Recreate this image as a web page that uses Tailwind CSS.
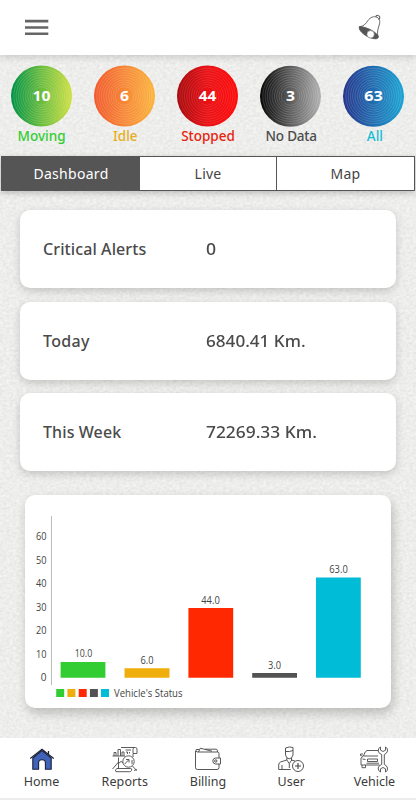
<!DOCTYPE html>
<html lang="en">
<head>
<meta charset="utf-8">
<meta name="viewport" content="width=device-width">
<title>Vehicle dashboard</title>
<script src="https://cdn.jsdelivr.net/npm/@tailwindcss/browser@4"></script>
</head>
<body class="bg-[#ebebea] font-['Noto_Sans','Open_Sans',sans-serif]">
<div class="relative isolate w-[416px] h-[800px] overflow-hidden flex flex-col">
  <!-- paper texture -->
  <svg class="absolute inset-0 -z-10" width="416" height="800" aria-hidden="true">
    <filter id="paper" x="0" y="0" width="100%" height="100%" color-interpolation-filters="sRGB">
      <feTurbulence type="fractalNoise" baseFrequency="0.3 0.4" numOctaves="3" seed="4"/>
      <feColorMatrix values="0.1 0 0 0 0.88  0.1 0 0 0 0.88  0.1 0 0 0 0.876  0 0 0 0 1"/>
    </filter>
    <rect width="416" height="800" filter="url(#paper)"/>
  </svg>

  <header class="h-[55px] shrink-0 bg-white flex items-center justify-between pl-[25px] pr-[33px] shadow-[0_2px_7px_rgba(0,0,0,0.16)]">
    <svg class="-mt-px" width="24" height="17" viewBox="0 0 24 17" fill="#666"><path d="M0 .8h23.300v2.600H0zM0 7.200h23.300v2.600H0zM0 13.500h23.300v2.600H0z"/></svg>
    <svg width="26" height="28" viewBox="0 0 26 28" fill="none" stroke="#666" stroke-width="1">
      <path d="M2.300 12.800C7 12.300 9 9.500 11 6.500 13.200 3.200 17 1.800 20 3.300c3 1.500 3.200 4.700 2.200 7.700-1.300 4-2.300 7.500-1.200 12" fill="#fff"/>
      <path d="M18.800 2.800c.4-2.200 4.200-1.500 4 .7 0 1-.7 1.800-1.500 1.900" stroke-width="1.200"/>
      <path d="M2.300 12.800c4.700-.9 18.200 5.200 19 10 .1 3-5.300 2-9.300.4C6.800 21 1.600 16.500 2.300 12.800z" fill="#555" stroke="#555"/>
      <circle cx="13.600" cy="20.300" r="3.700" fill="#fff" stroke="#777" stroke-width=".6"/>
    </svg>
  </header>

  <section class="grid grid-cols-5 h-[101px] shrink-0 pt-[10px] text-[13.500px] font-medium text-center">
    <div class="flex flex-col items-center">
      <svg width="62" height="62" viewBox="0 0 62 62"><defs>
        <linearGradient id="g1"><stop stop-color="#009247"/><stop offset=".5" stop-color="#6cbd3f"/><stop offset="1" stop-color="#cfe044"/></linearGradient>
        <linearGradient id="g2"><stop stop-color="#f15a2e"/><stop offset="1" stop-color="#fbb53f"/></linearGradient>
        <linearGradient id="g3"><stop stop-color="#a80b0f"/><stop offset=".5" stop-color="#ea1216"/><stop offset="1" stop-color="#ff0c0c"/></linearGradient>
        <linearGradient id="g4"><stop stop-color="#080808"/><stop offset="1" stop-color="#b2b2b2"/></linearGradient>
        <linearGradient id="g5"><stop stop-color="#26358c"/><stop offset="1" stop-color="#1ba5d5"/></linearGradient>
        <g id="rings" fill="none" stroke="#fff" stroke-opacity=".22" stroke-width=".7"><circle cx="30.500" cy="31" r="27.700"/><circle cx="30.500" cy="31" r="25.400"/><circle cx="30.500" cy="31" r="23.100"/><circle cx="30.500" cy="31" r="20.800"/><circle cx="30.500" cy="31" r="18.500"/><circle cx="30.500" cy="31" r="16.200"/><circle cx="30.500" cy="31" r="13.900"/><circle cx="30.500" cy="31" r="11.600"/><circle cx="30.500" cy="31" r="9.300"/></g>
        </defs><circle cx="30.500" cy="31" r="30.500" fill="url(#g1)"/><use href="#rings"/>
        <text x="30.500" y="35.600" font-size="13.500" font-weight="700" fill="#fff" text-anchor="middle" textLength="18" lengthAdjust="spacingAndGlyphs">10</text></svg>
      <span class="leading-[18px] text-[#32cd32]">Moving</span>
    </div>
    <div class="flex flex-col items-center">
      <svg width="62" height="62" viewBox="0 0 62 62"><circle cx="30.500" cy="31" r="30.500" fill="url(#g2)"/><use href="#rings"/>
        <text x="30.500" y="35.600" font-size="13.500" font-weight="700" fill="#fff" text-anchor="middle" textLength="9" lengthAdjust="spacingAndGlyphs">6</text></svg>
      <span class="leading-[18px] text-[#e8ae20] pl-px">Idle</span>
    </div>
    <div class="flex flex-col items-center">
      <svg width="62" height="62" viewBox="0 0 62 62"><circle cx="30.500" cy="31" r="30.500" fill="url(#g3)"/><use href="#rings" opacity=".7"/>
        <text x="30.500" y="35.800" font-size="13.500" font-weight="700" fill="#fff" text-anchor="middle" textLength="17.500" lengthAdjust="spacingAndGlyphs">44</text></svg>
      <span class="leading-[18px] text-[#e8230c]">Stopped</span>
    </div>
    <div class="flex flex-col items-center">
      <svg width="62" height="62" viewBox="0 0 62 62"><circle cx="30.500" cy="31.300" r="30.500" fill="url(#g4)"/><use href="#rings"/>
        <text x="30.500" y="35.800" font-size="13.500" font-weight="700" fill="#fff" text-anchor="middle" textLength="9" lengthAdjust="spacingAndGlyphs">3</text></svg>
      <span class="leading-[18px] text-[#4c4c4c] tracking-[-0.200px]">No Data</span>
    </div>
    <div class="flex flex-col items-center">
      <svg width="62" height="62" viewBox="0 0 62 62"><circle cx="30.500" cy="31.300" r="30.500" fill="url(#g5)"/><use href="#rings"/>
        <text x="30.500" y="35.800" font-size="13.500" font-weight="700" fill="#fff" text-anchor="middle" textLength="18.500" lengthAdjust="spacingAndGlyphs">63</text></svg>
      <span class="leading-[18px] text-[#16bcd4] pl-px">All</span>
    </div>
  </section>

  <nav class="mx-px h-[35px] shrink-0 flex border border-[#555] bg-white text-[14px] text-center leading-[33px] text-[#444] shadow-[0_2px_6px_rgba(0,0,0,0.22)]">
    <div class="w-[138px] bg-[#555] text-white tracking-[0.300px]">Dashboard</div>
    <div class="w-[137px] border-r border-[#555] tracking-[0.200px]">Live</div>
    <div class="flex-1 tracking-[0.300px]">Map</div>
  </nav>

  <main class="mx-5 mt-[19px] flex flex-col gap-[13.500px] text-[16px] font-medium text-[#4a4a4a]">
    <div class="h-[78px] rounded-[10px] bg-white flex items-center pl-[23px] shadow-[0_3px_9px_rgba(0,0,0,0.18)]"><span class="w-[163px] tracking-[0.100px]">Critical Alerts</span><span class="inline-block origin-left scale-x-110">0</span></div>
    <div class="h-[78px] rounded-[10px] bg-white flex items-center pl-[23px] shadow-[0_3px_9px_rgba(0,0,0,0.18)]"><span class="w-[163px] tracking-[0.350px]">Today</span><span class="inline-block origin-left scale-x-[1.07]">6840.41 Km.</span></div>
    <div class="h-[78px] rounded-[10px] bg-white flex items-center pl-[23px] shadow-[0_3px_9px_rgba(0,0,0,0.18)]"><span class="w-[163px] tracking-[0.100px]">This Week</span><span class="inline-block origin-left scale-x-[1.085]">72269.33 Km.</span></div>
  </main>

  <section class="ml-[25px] mt-[24px] w-[366px] h-[213px] shrink-0 rounded-[10px] bg-white shadow-[2px_5px_11px_rgba(0,0,0,0.22)]">
    <svg width="366" height="213" viewBox="25 495 366 213" font-family="'Open Sans','Noto Sans',sans-serif" font-size="10" fill="#444">
      <path d="M51.500 516v169" stroke="#bcbcbc"/>
      <g text-anchor="end"><text x="46.500" y="540.200" textLength="10.500" lengthAdjust="spacingAndGlyphs">60</text><text x="46.500" y="563.700" textLength="10.500" lengthAdjust="spacingAndGlyphs">50</text><text x="46.500" y="587.200" textLength="10.500" lengthAdjust="spacingAndGlyphs">40</text><text x="46.500" y="610.700" textLength="10.500" lengthAdjust="spacingAndGlyphs">30</text><text x="46.500" y="634.200" textLength="10.500" lengthAdjust="spacingAndGlyphs">20</text><text x="46.500" y="657.700" textLength="10.500" lengthAdjust="spacingAndGlyphs">10</text><text x="46.500" y="681.200">0</text></g>
      <path fill="#32cd32" d="M60.600 662h44.800v15.800H60.600z"/><path fill="#f0ae0c" d="M124.500 668.200h45v9.600h-45z"/><path fill="#ff2800" d="M188.400 608h44.800v69.800h-44.800z"/><path fill="#525252" d="M252.200 673.100H297v4.700h-44.800z"/><path fill="#00bcd6" d="M316 577.400h44.800v100.400H316z"/>
      <g text-anchor="middle"><text x="83.500" y="657.400" textLength="17.500" lengthAdjust="spacingAndGlyphs">10.0</text><text x="147" y="663.700" textLength="13" lengthAdjust="spacingAndGlyphs">6.0</text><text x="210.500" y="603.700" textLength="18.500" lengthAdjust="spacingAndGlyphs">44.0</text><text x="274.500" y="669" textLength="13" lengthAdjust="spacingAndGlyphs">3.0</text><text x="338.500" y="573" textLength="18.500" lengthAdjust="spacingAndGlyphs">63.0</text></g>
      <path fill="#32cd32" d="M56.200 689h8v8h-8z"/><path fill="#f0ae0c" d="M67.400 689h8v8h-8z"/><path fill="#ff2800" d="M78.700 689h8v8h-8z"/><path fill="#525252" d="M89.900 689h8v8h-8z"/><path fill="#00bcd6" d="M101 689h8v8h-8z"/>
      <text x="114" y="697.200" textLength="68.500" lengthAdjust="spacingAndGlyphs">Vehicle's Status</text>
    </svg>
  </section>

  <footer class="mt-auto h-[62px] shrink-0 grid grid-cols-5 border-b-2 border-[#ededed] bg-white pt-2 text-[12.500px] leading-[17px] text-[#3c3c3c] text-center">
    <div class="flex flex-col items-center"><svg width="28" height="27" viewBox="0 0 28 27"><path d="M4.800 12 14 4.500l9.200 7.500v11.300h-5.800v-6.500q0-3-3.400-3t-3.400 3v6.500H4.800z" fill="#3f63b8" stroke="#1b2138" stroke-width="1.100"/><path d="M2.300 12.500 14 3.200l11.700 9.300M20.500 5v3.500" fill="none" stroke="#1b2138" stroke-width="1.200"/></svg><span>Home</span></div>
    <div class="flex flex-col items-center"><svg width="28" height="27" viewBox="0 0 28 27" fill="none" stroke="#4a4a4a" stroke-width=".9"><path d="M10 1.500h14.500q1.500 0 1.500 2v4h-4v-4q0-1.500 1.500-2M1.500 10h12.500M3 10V6.500h2V10M7 10V3.500h2.500V10M11 10V6h2v4M14.500 4h5.500M15 6h1.500v2M18.500 6v1.500M7.500 11.500v11M22 8v3M1.500 23l6-7M7.500 17.500l2.500-2 2 1M25.500 24.500 21.500 20M23 24.500l3-1M6 22.500h13.500q2 0 1 2-.5 1.200-2 1.200H5q-2-1.700 1-3.200z"/><circle cx="17.500" cy="15.500" r="5.700"/><path d="m13.700 18 4-4.200M15 13.500h3v3M21 14v4"/></svg><span class="tracking-[0.100px]">Reports</span></div>
    <div class="flex flex-col items-center"><svg width="28" height="27" viewBox="0 0 28 27" fill="none" stroke="#444" stroke-width=".9"><path d="M25 12V7.500Q25 6 23.500 6H3q-1.700-1-.8-2.500H5M4.500 6l1.800-3.800L18 5.200M11 3.200h11.500q1 .2 1 2.800M1.500 5v16.500q0 2 2 2H23q2 0 2-2V18M26.500 12h-5q-2.700.3-2.700 3t2.700 3h5z"/><circle cx="21.800" cy="15" r="1.200"/></svg><span>Billing</span></div>
    <div class="flex flex-col items-center"><svg width="28" height="27" viewBox="0 0 28 27" fill="none" stroke="#444" stroke-width=".9"><path d="M8.500 5V2q4-1.800 7.500-.5V9q-1 3.800-3.800 3.800T8.500 9zM8.500 5.500q4 .5 7.500-1M9.800 12v2L3.500 16q-1.800.7-1.800 3v4.500h12M14.500 12v2l3.500 1M9.800 14l2.500 3.500 2.500-3.500M5 19v4.500M12.300 17.500V22"/><circle cx="21" cy="20" r="5.500"/><path d="M18 20h6M21 17v6" stroke-width="1.100"/></svg><span>User</span></div>
    <div class="flex flex-col items-center"><svg width="28" height="27" viewBox="0 0 28 27" fill="none" stroke="#4a4a4a" stroke-width=".9"><path d="M19 4.500H8Q6 4.800 4.500 10H19M4.500 10 2 12v7h18.500M4 8H1.500v1.500l2 .5M3 19v2.700h3.500V19M8.500 13h10v2.500h-10zM7.500 17.200H20M3.500 13l3 .5M22.700 8.500v10M25.300 8.500v10M21.500 1q-2.500 1-2.300 4 .5 2.700 3.500 3.500M26.500 1q2.500 1 2 4-.5 2.500-3.200 3.500M21.500 1v3.200L24 5.500l2.500-1.300V1M21.500 26q-2.500-1-2.300-4 .5-2.700 3.500-3.500M26.500 26q2.500-1 2-4-.5-2.500-3.200-3.500M21.500 26v-3.200l2.500-1.300 2.500 1.300V26" transform="translate(-1 0)"/></svg><span>Vehicle</span></div>
  </footer>
</div>
</body>
</html>
